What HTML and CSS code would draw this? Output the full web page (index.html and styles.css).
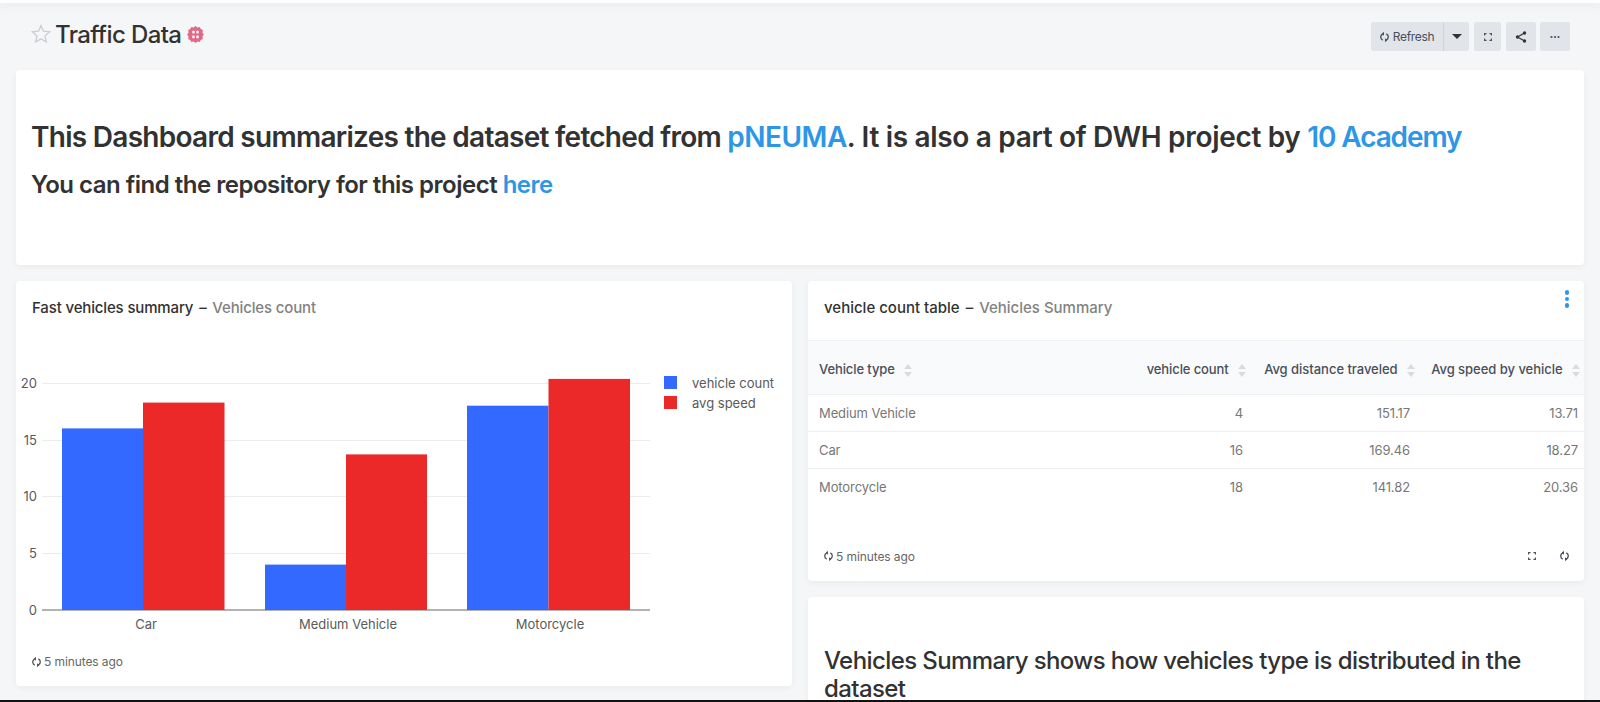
FILE: index.html
```html
<!DOCTYPE html>
<html lang="en">
<head>
  <meta charset="UTF-8" />
  <title>Traffic Data</title>
  <link rel="stylesheet" href="styles.css">
</head>
<body>
  <div class="page">
    <div class="topbar"></div>

    <header class="dash-header">
      <div class="dash-title">
        <svg class="star" width="20" height="20" viewBox="0 0 20 20"><path d="M10 1.600l2.500 5.600 6.100.6-4.600 4.100 1.300 6-5.300-3.100-5.300 3.100 1.300-6-4.600-4.100 6.100-.6z" fill="none" stroke="#ccd0d5" stroke-width="1.400"/></svg>
        <h1>Traffic Data</h1>
        <svg class="badge" width="19" height="19" viewBox="0 0 18 18"><path d="M9 1l1.800 1.300 2.200-.5 1 2 2 1-.5 2.200L17 9l-1.500 2 .5 2.200-2 1-1 2-2.200-.5L9 17l-1.800-1.300-2.200.5-1-2-2-1 .5-2.200L1 9l1.500-2L2 4.800l2-1 1-2 2.200.5z" fill="#e2688a"/><g fill="#fff"><rect x="6" y="5.500" width="2.200" height="2.500" rx=".5"/><rect x="9.800" y="5.500" width="2.200" height="2.500" rx=".5"/><rect x="6" y="10" width="2.200" height="2.500" rx=".5"/><rect x="9.800" y="10" width="2.200" height="2.500" rx=".5"/></g></svg>
      </div>
      <div class="dash-actions">
        <div class="btn-group">
          <button class="btn btn-refresh">
            <svg width="9" height="12" viewBox="0 0 9 12"><path d="M6.300 2.900A3.300 3.300 0 0 1 5 9.200M2.700 9.100A3.300 3.300 0 0 1 4 2.800" fill="none" stroke="#484f5a" stroke-width="1.300"/><path d="M4 .8v4l-2.200-2zM5 11.200v-4l2.200 2z" fill="#484f5a"/></svg>
            Refresh
          </button>
          <button class="btn btn-caret"><span class="caret"></span></button>
        </div>
        <button class="btn btn-icon">
          <svg width="8" height="8" viewBox="0 0 8 8"><path d="M.6 2.500V.6h1.900M5.500.6h1.900v1.900M7.400 5.500v1.900H5.500M2.500 7.400H.6V5.500" fill="none" stroke="#484f5a" stroke-width="1.100"/></svg>
        </button>
        <button class="btn btn-icon btn-share">
          <svg width="12" height="12" viewBox="0 0 12 12"><path d="M9.500 2L2.500 6l7 4" fill="none" stroke="#333" stroke-width="1.200"/><circle cx="9.500" cy="2" r="1.700" fill="#333"/><circle cx="2.500" cy="6" r="1.700" fill="#333"/><circle cx="9.500" cy="10" r="1.700" fill="#333"/></svg>
        </button>
        <button class="btn btn-icon btn-more">
          <svg width="10" height="4" viewBox="0 0 10 4"><circle cx="1.500" cy="2" r="1.100" fill="#484f5a"/><circle cx="5" cy="2" r="1.100" fill="#484f5a"/><circle cx="8.500" cy="2" r="1.100" fill="#484f5a"/></svg>
        </button>
      </div>
    </header>

    <section class="card intro">
      <h2>This Dashboard summarizes the dataset fetched from <a href="#" class="link-data">pNEUMA</a><span class="tail">. It is also a part of DWH project by </span><a href="#" class="link-academy">10 Academy</a></h2>
      <h3>You can find the repository for this project <a href="#">here</a></h3>
    </section>

    <div class="columns">
      <section class="card chart-card">
        <div class="card-title">Fast vehicles summary <span class="dash">–</span> <span class="sub">Vehicles count</span></div>
        <svg class="chart" width="776" height="322" viewBox="0 0 776 322">
          <g stroke="#ececec">
            <line x1="26" x2="634" y1="55.500" y2="55.500"/>
            <line x1="26" x2="634" y1="112.500" y2="112.500"/>
            <line x1="26" x2="634" y1="168.500" y2="168.500"/>
            <line x1="26" x2="634" y1="225.500" y2="225.500"/>
          </g>
          <g fill="#3369ff">
            <rect x="46" y="100.400" width="81" height="181.600"/>
            <rect x="249" y="236.600" width="81" height="45.400"/>
            <rect x="451" y="77.700" width="81.500" height="204.300"/>
          </g>
          <g fill="#ec2929">
            <rect x="127" y="74.600" width="81.500" height="207.400"/>
            <rect x="330" y="126.400" width="81" height="155.600"/>
            <rect x="532.500" y="50.900" width="81.500" height="231.100"/>
          </g>
          <line x1="26" x2="634" y1="282" y2="282" stroke="#666"/>
          <g class="axis-y" text-anchor="end">
            <text x="21" y="60">20</text>
            <text x="21" y="117">15</text>
            <text x="21" y="173">10</text>
            <text x="21" y="230">5</text>
            <text x="21" y="287">0</text>
          </g>
          <g class="axis-x" text-anchor="middle">
            <text x="130" y="301">Car</text>
            <text x="332" y="301">Medium Vehicle</text>
            <text x="534" y="301">Motorcycle</text>
          </g>
          <rect x="648" y="48" width="13" height="13" fill="#3369ff"/>
          <rect x="648" y="68" width="13" height="13" fill="#ec2929"/>
          <g class="legend">
            <text x="676" y="60">vehicle count</text>
            <text x="676" y="80">avg speed</text>
          </g>
        </svg>
        <div class="card-foot">
          <span class="stamp">
            <svg width="9" height="12" viewBox="0 0 9 12"><path d="M6.300 2.900A3.300 3.300 0 0 1 5 9.200M2.700 9.100A3.300 3.300 0 0 1 4 2.800" fill="none" stroke="#555" stroke-width="1.300"/><path d="M4 .8v4l-2.200-2zM5 11.200v-4l2.200 2z" fill="#555"/></svg>
            5 minutes ago
          </span>
        </div>
      </section>

      <div class="right-col">
        <section class="card table-card">
          <div class="card-title">vehicle count table <span class="dash">–</span> <span class="sub">Vehicles Summary</span>
            <span class="kebab"><i></i><i></i><i></i></span>
          </div>
          <table>
            <thead>
              <tr>
                <th class="type">Vehicle type <span class="sort"></span></th>
                <th>vehicle count <span class="sort"></span></th>
                <th>Avg distance traveled <span class="sort"></span></th>
                <th>Avg speed by vehicle <span class="sort"></span></th>
              </tr>
            </thead>
            <tbody>
              <tr><td class="type">Medium Vehicle</td><td>4</td><td>151.17</td><td>13.71</td></tr>
              <tr><td class="type">Car</td><td>16</td><td>169.46</td><td>18.27</td></tr>
              <tr><td class="type">Motorcycle</td><td>18</td><td>141.82</td><td>20.36</td></tr>
            </tbody>
          </table>
          <div class="card-foot table-foot">
            <span class="stamp">
              <svg width="9" height="12" viewBox="0 0 9 12"><path d="M6.300 2.900A3.300 3.300 0 0 1 5 9.200M2.700 9.100A3.300 3.300 0 0 1 4 2.800" fill="none" stroke="#555" stroke-width="1.300"/><path d="M4 .8v4l-2.200-2zM5 11.200v-4l2.200 2z" fill="#555"/></svg>
              5 minutes ago
            </span>
            <span class="foot-icons">
              <svg width="8" height="8" viewBox="0 0 8 8"><path d="M.6 2.500V.6h1.900M5.500.6h1.900v1.900M7.400 5.500v1.900H5.500M2.500 7.400H.6V5.500" fill="none" stroke="#484f5a" stroke-width="1.100"/></svg>
              <svg width="9" height="12" viewBox="0 0 9 12"><path d="M6.300 2.900A3.300 3.300 0 0 1 5 9.200M2.700 9.100A3.300 3.300 0 0 1 4 2.800" fill="none" stroke="#484f5a" stroke-width="1.300"/><path d="M4 .8v4l-2.200-2zM5 11.200v-4l2.200 2z" fill="#484f5a"/></svg>
            </span>
          </div>
        </section>

        <section class="card note">
          <h2>Vehicles Summary shows how vehicles type is distributed in the dataset</h2>
        </section>
      </div>
    </div>
  </div>
</body>
</html>
```

FILE: styles.css
```css
html, body {
  margin: 0;
  height: 702px;
  overflow: hidden;
}
body {
  font-family: Inter, "Noto Sans", sans-serif;
  background: #f5f6f8;
  color: #323232;
}
.page {
  height: 700px;
  overflow: hidden;
  border-bottom: 2px solid #111;
  padding: 0 16px;
}
.topbar {
  height: 3px;
  margin: 0 -16px;
  background: #fff;
  box-shadow: 0 2px 10px rgba(0,0,0,0.1);
}

.dash-header {
  height: 67px;
  display: flex;
  align-items: flex-start;
  justify-content: space-between;
}
.dash-title {
  display: flex;
  align-items: center;
  margin: 15px 0 0 15px;
  height: 32px;
}
.dash-title h1 {
  font-size: 24px;
  font-weight: 500;
  letter-spacing: -0.6px;
  margin: 0 5px 0 4px;
}
.dash-actions {
  display: flex;
  gap: 5px;
  margin: 19px 14px 0 0;
}
.btn-group {
  display: flex;
}
.btn {
  height: 29px;
  border: 0;
  padding: 0;
  background: #e1e5ea;
  border-radius: 2px;
  font-family: inherit;
  display: flex;
  align-items: center;
  justify-content: center;
}
.btn-refresh {
  width: 73px;
  gap: 4px;
  font-size: 12px;
  letter-spacing: -0.35px;
  color: #484f5a;
  border-right: 1px solid #cfd3d9;
  border-radius: 2px 0 0 2px;
}
.btn-caret {
  width: 25px;
  border-radius: 0 2px 2px 0;
}
.caret {
  border-top: 5px solid #333;
  border-left: 5px solid transparent;
  border-right: 5px solid transparent;
}
.btn-icon {
  width: 27px;
}
.btn-share {
  width: 30px;
}
.btn-more {
  width: 30px;
  margin-left: -1px;
}

.card {
  background: #fff;
  border-radius: 4px;
  box-shadow: 0 2px 6px rgba(0,0,0,0.05);
}
a {
  color: #2d96e6;
  text-decoration: none;
}
.intro {
  height: 195px;
  padding: 49px 15px 0;
  box-sizing: border-box;
}
.intro h2 {
  font-size: 28px;
  font-weight: 600;
  letter-spacing: -0.72px;
  line-height: 36px;
  margin: 0 0 14px;
}
.intro .link-data {
  letter-spacing: -0.5px;
}
.intro .tail {
  letter-spacing: -0.32px;
}
.intro .link-academy {
  letter-spacing: -1.1px;
}
.intro h3 {
  font-size: 24px;
  font-weight: 600;
  letter-spacing: -0.5px;
  line-height: 32px;
  margin: 0;
}

.columns {
  display: grid;
  grid-template-columns: 776px 776px;
  gap: 16px;
  margin-top: 16px;
}
.chart-card {
  height: 405px;
}
.card-title {
  font-size: 15px;
  font-weight: 500;
  letter-spacing: -0.15px;
  padding: 18px 16px 0;
  line-height: 18px;
}
.card-title .dash {
  margin: 0 2px;
}
.card-title .sub {
  color: #828282;
}
.chart {
  display: block;
  margin-top: 11px;
}
.chart text {
  font-family: Inter, "Noto Sans", sans-serif;
}
.axis-y text, .axis-x text, .legend text {
  font-size: 13px;
  fill: #5a5a5a;
}
.card-foot {
  padding: 0 16px;
  font-size: 12px;
  color: #666;
  letter-spacing: -0.1px;
}
.stamp {
  display: inline-flex;
  align-items: center;
  gap: 3px;
}
.chart-card .card-foot {
  margin-top: 4px;
}

.right-col {
  display: flex;
  flex-direction: column;
  gap: 16px;
}
.table-card {
  height: 300px;
}
.table-card .card-title {
  position: relative;
  height: 60px;
  box-sizing: border-box;
  letter-spacing: 0;
  border-bottom: 1px solid #f0f1f3;
}
.kebab {
  position: absolute;
  right: 15px;
  top: 9px;
  display: flex;
  flex-direction: column;
  gap: 2px;
}
.kebab i {
  width: 4.500px;
  height: 4.500px;
  border-radius: 50%;
  background: #2d96e6;
}
table {
  width: 100%;
  table-layout: fixed;
  border-collapse: collapse;
  font-size: 13px;
  letter-spacing: -0.1px;
}
th {
  height: 53px;
  padding: 3px 1px 0 0;
  box-sizing: border-box;
  background: #f9fafb;
  font-weight: 500;
  color: #484f5a;
  text-align: right;
  border-bottom: 1px solid #eceef0;
  white-space: nowrap;
}
td {
  height: 36px;
  padding: 0 4px 0 0;
  color: #777;
  text-align: right;
  border-bottom: 1px solid #eceef0;
}
th:nth-child(1) { width: 300px; }
th:nth-child(2) { width: 139px; }
th:nth-child(3) { width: 168px; padding-right: 0; letter-spacing: -0.03px; }
th:nth-child(4) { padding-right: 4px; letter-spacing: -0.03px; }
td:nth-child(3) { padding-right: 5px; }
td:nth-child(4) { padding-right: 6px; }
th.type, td.type {
  text-align: left;
  padding-left: 11px;
}
tbody tr:last-child td {
  border-bottom: 0;
}
.sort {
  display: inline-flex;
  flex-direction: column;
  gap: 3px;
  margin-left: 6px;
  vertical-align: middle;
}
.sort::before, .sort::after {
  content: "";
  border-left: 4px solid transparent;
  border-right: 4px solid transparent;
}
.sort::before {
  border-bottom: 5px solid #d8dbdf;
}
.sort::after {
  border-top: 5px solid #d8dbdf;
}
.table-foot {
  display: flex;
  justify-content: space-between;
  align-items: center;
  margin-top: 44px;
}
.foot-icons {
  display: flex;
  gap: 24px;
  align-items: center;
  margin-right: -1px;
}
.note {
  height: 200px;
  padding: 50px 16px 0;
}
.note h2 {
  font-size: 24px;
  font-weight: 500;
  letter-spacing: -0.59px;
  line-height: 28px;
  margin: 0;
}
```
